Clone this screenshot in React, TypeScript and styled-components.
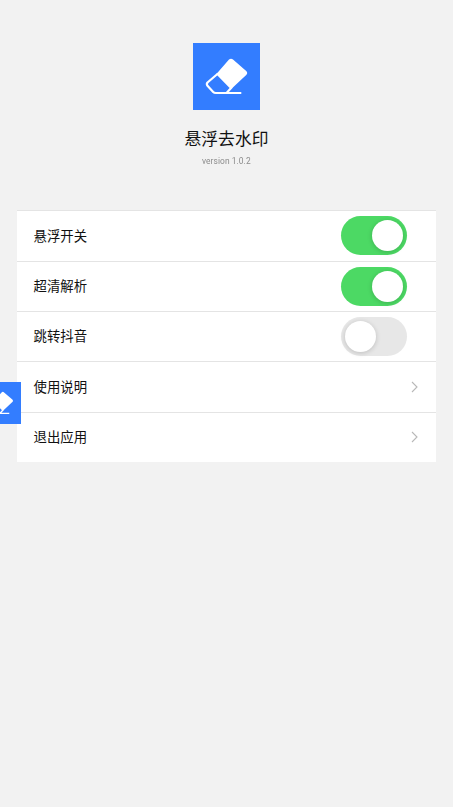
import React from 'react';
import styled, { createGlobalStyle } from 'styled-components';

const GlobalStyle = createGlobalStyle`
  * { box-sizing: border-box; }
  body {
    margin: 0;
    background: #f2f2f2;
    font-family: Roboto, "Noto Sans CJK SC", sans-serif;
  }
`;

const Page = styled.main`
  position: relative;
  min-height: 807px;
  padding: 43px 17px 0;
  overflow: hidden;
`;

const Header = styled.header`
  display: flex;
  flex-direction: column;
  align-items: center;
  height: 167.3px;
`;

const Logo = styled.svg<{ $size: number }>`
  display: block;
  flex: none;
  width: ${(p) => p.$size}px;
  height: ${(p) => p.$size}px;
  background: #337dff;
`;

const Title = styled.h1`
  margin: 16px 0 0;
  font-size: 16.8px;
  line-height: 26px;
  font-weight: 400;
  color: #111;
`;

const Version = styled.div`
  margin-top: 3px;
  font-size: 8.4px;
  line-height: 12px;
  letter-spacing: 0.08px;
  color: #8c8c8c;
  will-change: transform;
`;

const List = styled.section`
  background: #fff;
`;

const Row = styled.div`
  display: flex;
  align-items: center;
  justify-content: space-between;
  height: 50.35px;
  padding: 0 17px 0 16.5px;
  border-top: 1px solid #e4e4e4;
`;

const Label = styled.span`
  padding-top: 1.4px;
  font-size: 13.4px;
  line-height: 20px;
  color: #111;
`;

const Toggle = styled.button<{ $on: boolean }>`
  display: flex;
  align-items: center;
  justify-content: ${(p) => (p.$on ? 'flex-end' : 'flex-start')};
  width: 66px;
  height: 39px;
  margin-right: 12px;
  padding: 0 4px;
  border: 0;
  border-radius: 20px;
  background: ${(p) => (p.$on ? '#4cd964' : '#e7e7e7')};
`;

const Knob = styled.span`
  width: 31px;
  height: 31px;
  border-radius: 50%;
  background: #fff;
  box-shadow: 0 1px 5px rgba(0, 0, 0, 0.18);
`;

const Chevron = styled.svg`
  width: 7px;
  height: 12px;
  margin-right: 1px;
`;

const FloatingButton = styled.div`
  position: absolute;
  left: -21px;
  top: 382.4px;
`;

const EraserLogo = ({ size }: { size: number }) => (
  <Logo $size={size} viewBox="0 0 67 67">
    <path
      d="M36 16.6Q38 14.8 40 16.6L53.2 28Q55.2 30 53.2 32L39.6 44.8Q38 46.2 36.4 44.8L23.2 31.2Z"
      fill="#fff"
    />
    <path
      d="M25 30.5L14.5 39.5Q13.2 41 14.5 42.8L20.2 48.9Q21.2 50 22.8 50H48.3M33.5 50L39 44"
      fill="none"
      stroke="#fff"
      strokeWidth="2.2"
      strokeLinejoin="round"
    />
  </Logo>
);

const toggles = [
  { label: '悬浮开关', on: true },
  { label: '超清解析', on: true },
  { label: '跳转抖音', on: false },
];

const links = ['使用说明', '退出应用'];

export default function App() {
  return (
    <>
      <GlobalStyle />
      <Page>
        <Header>
          <EraserLogo size={67} />
          <Title>悬浮去水印</Title>
          <Version>version 1.0.2</Version>
        </Header>
        <List>
          {toggles.map(({ label, on }) => (
            <Row key={label}>
              <Label>{label}</Label>
              <Toggle $on={on} role="switch" aria-checked={on} aria-label={label}>
                <Knob />
              </Toggle>
            </Row>
          ))}
          {links.map((label) => (
            <Row key={label}>
              <Label>{label}</Label>
              <Chevron viewBox="0 0 7 12">
                <path d="M1 1L6 6L1 11" fill="none" stroke="#b8b8b8" strokeWidth="1.1" />
              </Chevron>
            </Row>
          ))}
        </List>
        <FloatingButton>
          <EraserLogo size={42} />
        </FloatingButton>
      </Page>
    </>
  );
}
